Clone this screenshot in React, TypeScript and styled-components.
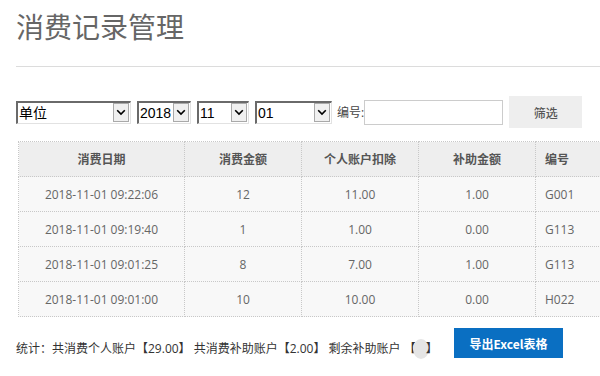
import styled, { createGlobalStyle } from "styled-components";

const GlobalStyle = createGlobalStyle`
  body {
    margin: 0;
    background: #fff;
    font-family: "Open Sans", "Noto Sans CJK SC", sans-serif;
  }
`;

const Page = styled.div`
  width: 600px;
  height: 376px;
  overflow: hidden;
  padding-left: 16px;
  box-sizing: border-box;
`;

const Title = styled.h1`
  margin: 0;
  padding-top: 6px;
  font-family: "Noto Sans CJK SC", sans-serif;
  font-size: 28px;
  font-weight: 400;
  line-height: 40px;
  color: #666;
`;

const Divider = styled.hr`
  margin: 20px 0 0;
  border: 0;
  border-top: 1px solid #dcdcdc;
  width: 600px;
`;

const Filters = styled.div`
  display: flex;
  align-items: center;
  gap: 6px;
  margin-top: 29px;
  height: 32px;
`;

type SelectBoxProps = {
  width: number;
};

const SelectBox = styled.label<SelectBoxProps>`
  display: inline-flex;
  align-items: stretch;
  width: ${({ width }) => width}px;
  height: 23px;
  box-sizing: border-box;
  border-top: 2px solid #6a6a6a;
  border-left: 2px solid #6a6a6a;
  border-right: 1px solid #e2e2e2;
  border-bottom: 1px solid #e2e2e2;
  background: #fff;
`;

const NativeSelect = styled.select`
  flex: 1;
  min-width: 0;
  appearance: none;
  border: 0;
  outline: none;
  background: transparent;
  padding: 0 0 0 1px;
  font-family: "Liberation Sans", "Noto Sans CJK SC", sans-serif;
  font-size: 14px;
  color: #000;
`;

const Arrow = styled.span`
  width: 16px;
  display: flex;
  align-items: center;
  justify-content: center;
  box-sizing: border-box;
  border: 1px solid #a9a9a9;
  background: #f0f0f0;
  margin: 0 1px 1px 0;
`;

const Chevron = () => (
  <svg width="10" height="7" viewBox="0 0 10 7">
    <path d="M1.2 1.2 L5 5 L8.8 1.2" fill="none" stroke="#000" strokeWidth="1.6" />
  </svg>
);

const Select = ({ width, value }: { width: number; value: string }) => (
  <SelectBox width={width}>
    <NativeSelect defaultValue={value}>
      <option>{value}</option>
    </NativeSelect>
    <Arrow>
      <Chevron />
    </Arrow>
  </SelectBox>
);

const Label = styled.span`
  font-size: 12px;
  color: #444;
  margin-left: -1px;
  margin-right: -6px;
`;

const TextInput = styled.input`
  width: 139px;
  height: 25px;
  box-sizing: border-box;
  border: 1px solid #ccc;
  outline: none;
`;

const GrayButton = styled.button`
  width: 73px;
  height: 32px;
  border: 0;
  background: #eee;
  color: #555;
  font-family: "Noto Sans CJK SC", sans-serif;
  font-size: 12px;
  font-weight: 500;
`;

const Table = styled.table`
  margin: 13px 0 0 2px;
  border-collapse: collapse;
  table-layout: fixed;
  width: 640px;
  font-size: 12px;
  color: #666;
`;

type CellProps = {
  align?: "left" | "center";
};

const Th = styled.th<CellProps>`
  height: 34px;
  padding: 0 0 0 ${({ align }) => (align === "left" ? "9px" : "0")};
  border: 1px dotted #c8c8c8;
  background: #eee;
  color: #555;
  font-weight: 600;
  text-align: ${({ align }) => align ?? "center"};
`;

const Td = styled.td<CellProps>`
  height: 34px;
  padding: 0 0 0 ${({ align }) => (align === "left" ? "9px" : "0")};
  border: 1px dotted #c8c8c8;
  background: #f8f8f8;
  text-align: ${({ align }) => align ?? "center"};
`;

const Footer = styled.div`
  display: flex;
  align-items: flex-end;
  margin-top: 10px;
  height: 31px;
`;

const Summary = styled.div`
  display: flex;
  align-items: center;
  width: 438px;
  font-size: 12px;
  color: #333;
  line-height: 18px;
  margin-bottom: -1px;
`;

const Blank = styled.span`
  display: inline-block;
  width: 16px;
  height: 20px;
  border-radius: 50%;
  background: #e5e5e5;
  margin: 0 -3px;
`;

const ExportButton = styled.button`
  width: 109px;
  height: 30px;
  border: 0;
  background: #0a6fc2;
  color: #fff;
  font-family: "Noto Sans CJK SC", sans-serif;
  font-size: 12px;
  font-weight: 700;
`;

const rows = [
  { date: "2018-11-01 09:22:06", amount: "12", personal: "11.00", subsidy: "1.00", code: "G001" },
  { date: "2018-11-01 09:19:40", amount: "1", personal: "1.00", subsidy: "0.00", code: "G113" },
  { date: "2018-11-01 09:01:25", amount: "8", personal: "7.00", subsidy: "1.00", code: "G113" },
  { date: "2018-11-01 09:01:00", amount: "10", personal: "10.00", subsidy: "0.00", code: "H022" },
];

export default function App() {
  return (
    <Page>
      <GlobalStyle />
      <Title>消费记录管理</Title>
      <Divider />
      <Filters>
        <Select width={115} value="单位" />
        <Select width={54} value="2018" />
        <Select width={52} value="11" />
        <Select width={77} value="01" />
        <Label>编号:</Label>
        <TextInput />
        <GrayButton>筛选</GrayButton>
      </Filters>
      <Table>
        <colgroup>
          <col style={{ width: 166 }} />
          <col style={{ width: 117 }} />
          <col style={{ width: 117 }} />
          <col style={{ width: 117 }} />
          <col style={{ width: 123 }} />
        </colgroup>
        <thead>
          <tr>
            <Th>消费日期</Th>
            <Th>消费金额</Th>
            <Th>个人账户扣除</Th>
            <Th>补助金额</Th>
            <Th align="left">编号</Th>
          </tr>
        </thead>
        <tbody>
          {rows.map((r) => (
            <tr key={r.date}>
              <Td>{r.date}</Td>
              <Td>{r.amount}</Td>
              <Td>{r.personal}</Td>
              <Td>{r.subsidy}</Td>
              <Td align="left">{r.code}</Td>
            </tr>
          ))}
        </tbody>
      </Table>
      <Footer>
        <Summary>
          统计：共消费个人账户【29.00】 共消费补助账户【2.00】 剩余补助账户 【<Blank />】
        </Summary>
        <ExportButton>导出Excel表格</ExportButton>
      </Footer>
    </Page>
  );
}
